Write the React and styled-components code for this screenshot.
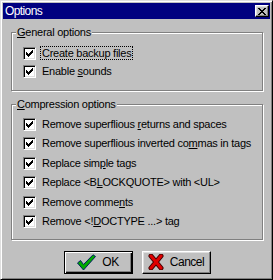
import React from "react";
import styled, { createGlobalStyle } from "styled-components";

const Global = createGlobalStyle`
  html, body {
    margin: 0;
    padding: 0;
    background: #c0c0c0;
  }
  body {
    font-family: "Liberation Sans", Arial, sans-serif;
    font-size: 11px;
    color: #000;
  }
`;

const Window = styled.div`
  box-sizing: border-box;
  width: 273px;
  height: 280px;
  background: #c0c0c0;
  border: 1px solid;
  border-color: #dfdfdf #000 #000 #dfdfdf;
  box-shadow: inset 1px 1px #fff, inset -1px -1px #808080;
  padding: 2px;
  display: flex;
  flex-direction: column;
`;

const TitleBar = styled.div`
  height: 16px;
  background: #000080;
  display: flex;
  align-items: center;
  justify-content: space-between;
  padding: 0 1px 0 2px;
`;

const Title = styled.span`
  color: #fff;
  font-size: 12px;
  letter-spacing: -0.6px;
  line-height: 16px;
`;

const CloseButton = styled.div`
  box-sizing: border-box;
  width: 14px;
  height: 12px;
  background: #c0c0c0;
  border: 1px solid;
  border-color: #fff #000 #000 #fff;
  box-shadow: inset -1px -1px #808080, inset 1px 1px #dfdfdf;
  display: flex;
  align-items: center;
  justify-content: center;
`;

const Body = styled.div`
  display: flex;
  flex-direction: column;
  gap: 7px;
  padding: 7px 7px 0 8px;
`;

const Group = styled.fieldset`
  margin: 0;
  padding: 0;
  min-width: 0;
  border: 1px solid #808080;
  box-shadow: inset 1px 1px #fff, 1px 1px #fff;
`;

const Legend = styled.legend`
  margin-left: 4px;
  padding: 0 1px;
  background: #c0c0c0;
  line-height: 13px;
  letter-spacing: -0.25px;
`;

const Rows = styled.div`
  display: flex;
  flex-direction: column;
  gap: ${(p) => p.$gap}px;
  padding: ${(p) => p.$top}px 0 ${(p) => p.$bottom}px 11px;
`;

const Row = styled.div`
  display: flex;
  align-items: flex-end;
  gap: 4px;
  height: 14px;
`;

const Box = styled.span`
  box-sizing: border-box;
  width: 13px;
  height: 13px;
  flex: none;
  background: #fff;
  border: 1px solid;
  border-color: #808080 #fff #fff #808080;
  box-shadow: inset 1px 1px #000, inset -1px -1px #dfdfdf;
  display: flex;
  align-items: center;
  justify-content: center;
`;

const Label = styled.span`
  border: 1px dotted ${(p) => (p.$focus ? "#000" : "transparent")};
  padding: 0 1px;
  line-height: 12px;
  letter-spacing: -0.25px;
  white-space: nowrap;
`;

const Buttons = styled.div`
  display: flex;
  justify-content: center;
  gap: 9px;
  margin-top: 4px;
`;

const Button = styled.div`
  box-sizing: border-box;
  width: 69px;
  height: 23px;
  background: #c0c0c0;
  border: 1px solid;
  border-color: ${(p) => (p.$default ? "#000" : "#fff #000 #000 #fff")};
  box-shadow: ${(p) =>
    p.$default
      ? "inset 1px 1px #fff, inset -1px -1px #000, inset -2px -2px #808080"
      : "inset -1px -1px #808080, inset 1px 1px #dfdfdf"};
  display: flex;
  align-items: center;
  justify-content: center;
  gap: 6px;
  font-size: 12px;
  letter-spacing: -0.5px;
`;

const Pixels = ({ rows }) => (
  <svg width={rows[0].length} height={rows.length} shapeRendering="crispEdges">
    {rows.flatMap((r, y) =>
      [...r].map((c, x) =>
        c === "#" ? <rect key={`${x}-${y}`} x={x} y={y} width={1} height={1} fill="#000" /> : null
      )
    )}
  </svg>
);

const TICK = ["......#", ".....##", "#...###", "##.###.", "#####..", ".###...", "..#...."];
const CROSS = ["##....##", ".##..##.", "..####..", "...##...", "..####..", ".##..##.", "##....##"];

const CheckIcon = () => (
  <svg width="19" height="17" viewBox="0 0 19 17">
    <polygon
      points="0.5,9 3.5,6.5 6.5,10.5 16,0.8 18.5,2.5 6.5,16"
      fill="#00a800"
      stroke="#002060"
      strokeWidth="1"
      strokeLinejoin="round"
    />
  </svg>
);

const CrossIcon = () => (
  <svg width="16" height="16" viewBox="0 0 16 16">
    <path d="M3 2 L13 14 M13 2 L3 14" stroke="#400000" strokeWidth="5" strokeLinecap="round" />
    <path d="M3 2 L13 14 M13 2 L3 14" stroke="#e00000" strokeWidth="3" strokeLinecap="round" />
  </svg>
);

const Check = ({ children, focus }) => (
  <Row>
    <Box>
      <Pixels rows={TICK} />
    </Box>
    <Label $focus={focus}>{children}</Label>
  </Row>
);

export default function App() {
  return (
    <>
      <Global />
      <Window>
        <TitleBar>
          <Title>Options</Title>
          <CloseButton>
            <Pixels rows={CROSS} />
          </CloseButton>
        </TitleBar>
        <Body>
          <Group>
            <Legend>
              <u>G</u>eneral options
            </Legend>
            <Rows $gap={4} $top={7} $bottom={12}>
              <Check focus>Create backup files</Check>
              <Check>
                Enable <u>s</u>ounds
              </Check>
            </Rows>
          </Group>
          <Group>
            <Legend>
              <u>C</u>ompression options
            </Legend>
            <Rows $gap={5.4} $top={6} $bottom={11}>
              <Check>
                Remove superflious <u>r</u>eturns and spaces
              </Check>
              <Check>
                Remove superflious inverted co<u>m</u>mas in tags
              </Check>
              <Check>
                Replace sim<u>p</u>le tags
              </Check>
              <Check>
                Replace &lt;B<u>L</u>OCKQUOTE&gt; with &lt;UL&gt;
              </Check>
              <Check>
                Remove comme<u>n</u>ts
              </Check>
              <Check>
                Remove &lt;!<u>D</u>OCTYPE ...&gt; tag
              </Check>
            </Rows>
          </Group>
          <Buttons>
            <Button $default>
              <CheckIcon />
              OK
            </Button>
            <Button>
              <CrossIcon />
              Cancel
            </Button>
          </Buttons>
        </Body>
      </Window>
    </>
  );
}
